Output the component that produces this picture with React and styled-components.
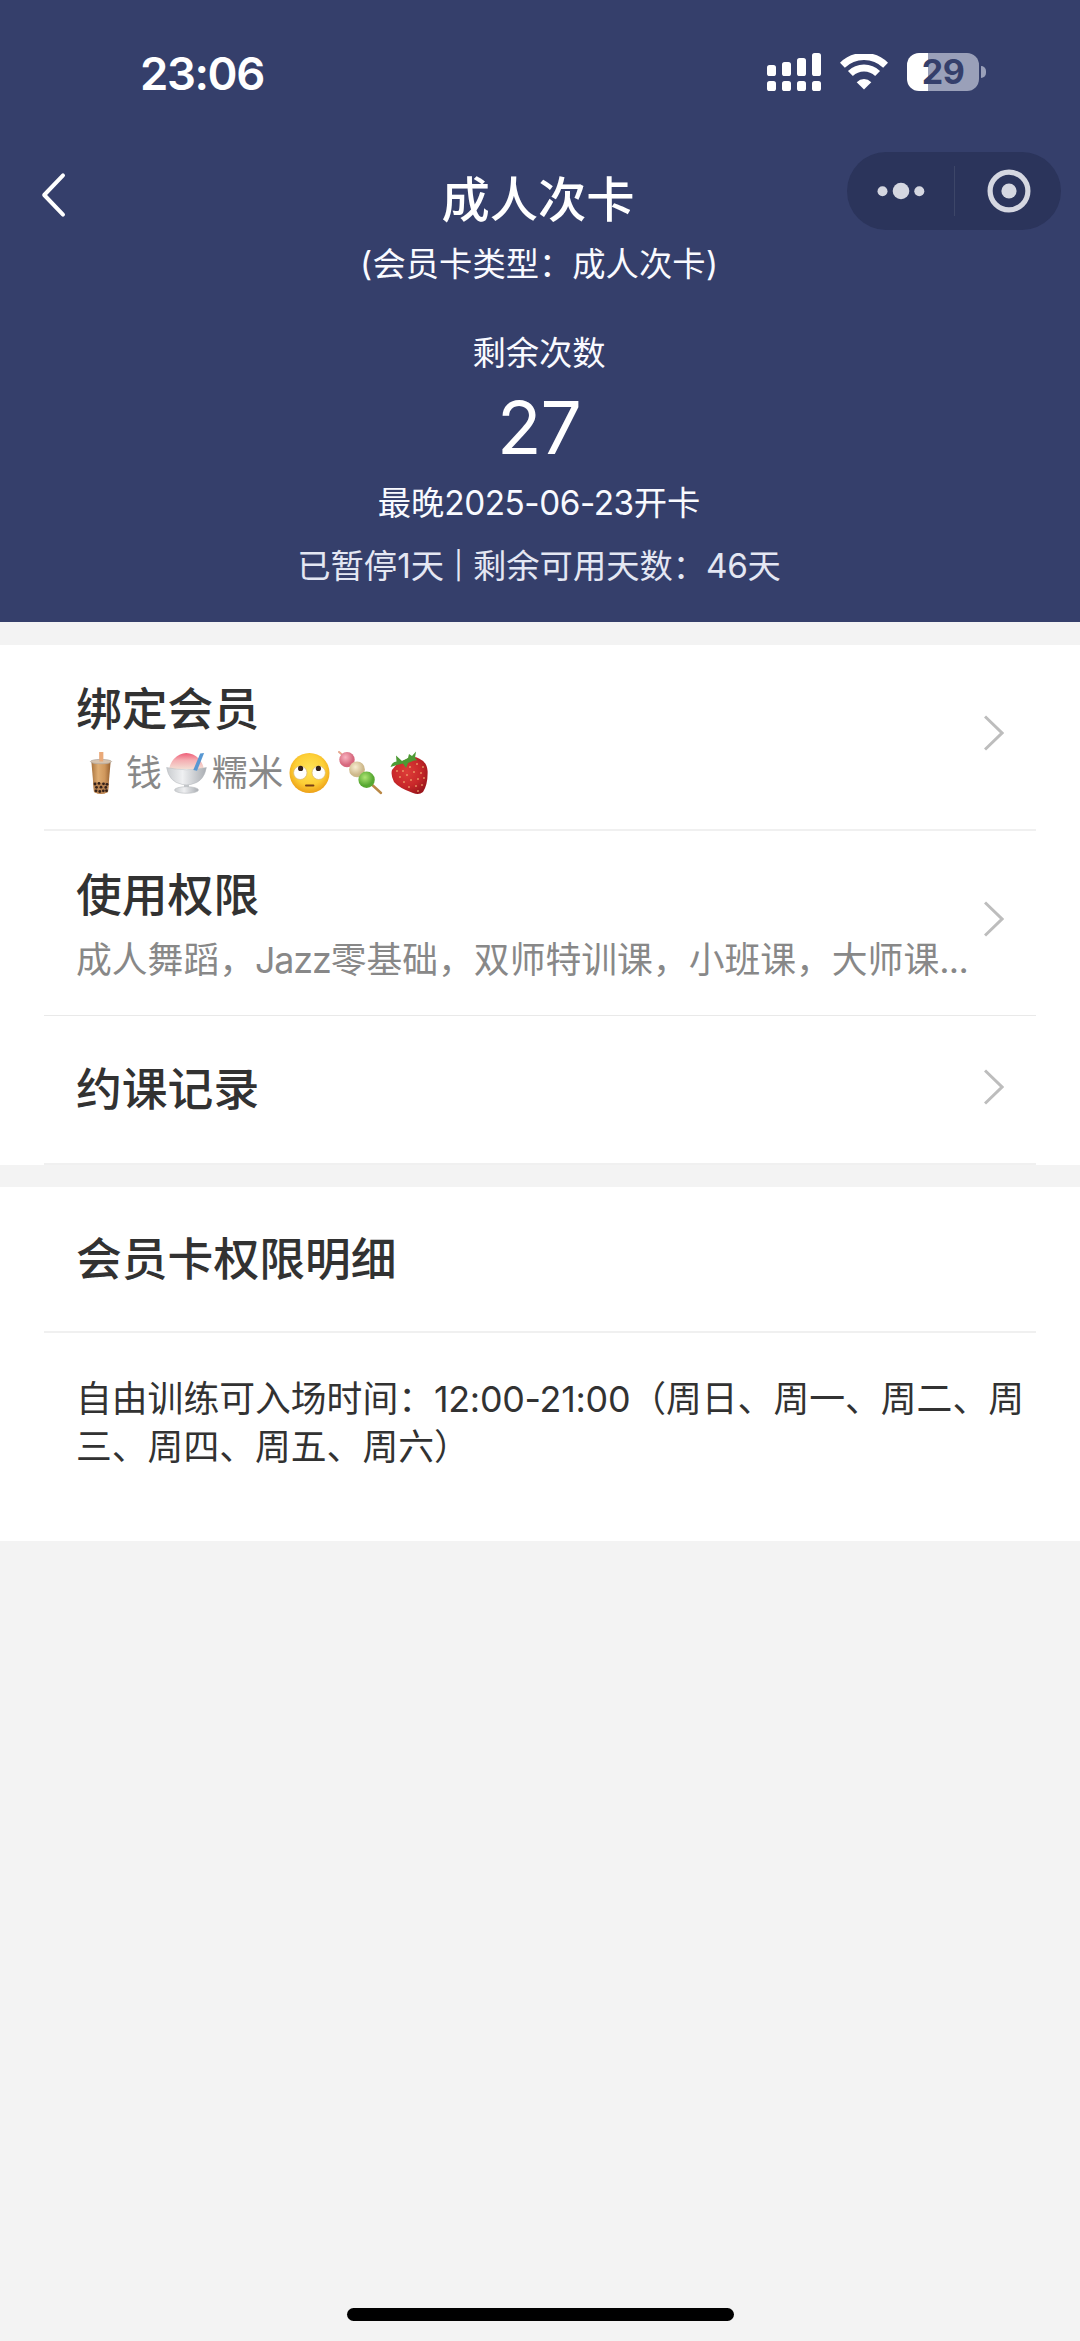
import React from "react";
import styled, { createGlobalStyle } from "styled-components";

const GlobalStyle = createGlobalStyle`
  * { box-sizing: border-box; }
  body {
    margin: 0;
    background: #f3f3f3;
    font-family: Inter, "Noto Sans CJK SC", sans-serif;
    text-spacing-trim: space-all;
    -webkit-font-smoothing: antialiased;
  }
`;

const Screen = styled.div`
  width: 1080px;
  height: 2341px;
  display: flex;
  flex-direction: column;
  background: #f3f3f3;
  overflow: hidden;
`;

const Header = styled.header`
  height: 622px;
  flex: none;
  background: #353f6b;
  color: #fff;
`;

const StatusBar = styled.div`
  height: 147px;
  padding: 0 94px 0 140px;
  display: flex;
  align-items: center;
  justify-content: space-between;
`;

const Clock = styled.time`
  font-size: 45.5px;
  line-height: 60px;
  font-weight: 600;
  letter-spacing: -1.4px;
`;

const StatusIcons = styled.div`
  display: flex;
  align-items: center;
  gap: 19px;
  padding-bottom: 3px;
`;

const BatteryBox = styled.div`
  display: flex;
  align-items: center;
  gap: 2px;
`;

const BatteryBody = styled.div`
  width: 72px;
  height: 38px;
  border-radius: 12px;
  background: linear-gradient(to right, #fff 0 21px, #9aa0b9 21px);
  color: #353f6b;
  font-size: 34px;
  line-height: 38px;
  font-weight: 700;
  letter-spacing: -0.5px;
  text-align: center;
`;

const BatteryTip = styled.div`
  width: 5px;
  height: 12px;
  border-radius: 0 6px 6px 0;
  background: #9aa0b9;
`;

const NavBar = styled.nav`
  height: 88px;
  padding: 0 19px 0 40px;
  display: grid;
  grid-template-columns: 214px 1fr 214px;
`;

const BackButton = styled.button`
  width: 30px;
  height: 95px;
  padding: 0;
  border: 0;
  background: none;
  display: flex;
  align-items: center;
`;

const NavTitle = styled.h1`
  margin: 16px 0 0;
  padding-right: 25px;
  font-size: 48.3px;
  line-height: 73px;
  font-weight: 500;
  text-align: center;
`;

const Capsule = styled.div`
  width: 214px;
  height: 78px;
  margin-top: 5px;
  border-radius: 39px;
  background: #2b345b;
  display: grid;
  grid-template-columns: 107px 1px 107px;
  align-items: center;
  justify-items: center;
`;

const CapsuleDivider = styled.div`
  width: 1px;
  height: 50px;
  background: #3d4668;
`;

const CardInfo = styled.div`
  padding-right: 2px;
  display: flex;
  flex-direction: column;
  align-items: center;
`;

const InfoLine = styled.div`
  margin-top: ${(p) => p.$gap || 0}px;
  font-size: 33.3px;
  line-height: ${(p) => p.$line || 50}px;
  color: ${(p) => p.$color || "#f9faff"};
  white-space: pre;
`;

const Latin = styled.span`
  letter-spacing: ${(p) => p.$track}px;
`;

const Paren = styled.span`
  display: inline-block;
  width: 13px;
  text-align: center;
`;

const Divider = styled.span`
  display: inline-block;
  width: 29px;
  height: 50px;
  font-size: 27px;
  text-align: center;
  vertical-align: top;
`;

const Remaining = styled.div`
  font-size: 73px;
  line-height: 100px;
  font-weight: 400;
  letter-spacing: -0.8px;
`;

const Section = styled.section`
  flex: none;
  margin-top: ${(p) => p.$gap}px;
  padding: 0 44px;
  background: #fff;
`;

const Row = styled.div`
  height: ${(p) => p.$height}px;
  padding: ${(p) => p.$top}px 32px 0 32px;
  border-bottom: ${(p) => p.$rule || 2}px solid ${(p) => (p.$rule === 1 ? "#e9e9e9" : "#f0f0f0")};
  display: grid;
  grid-template-columns: 1fr 20px;
  align-items: start;
`;

const RowText = styled.div`
  min-width: 0;
`;

const RowTitle = styled.h2`
  margin: 0;
  font-size: 45.8px;
  line-height: 64px;
  font-weight: 500;
  color: #323232;
`;

const RowNote = styled.div`
  height: 64px;
  font-size: 35.8px;
  line-height: 64px;
  color: #888;
  white-space: nowrap;
`;

const MemberName = styled(RowNote)`
  height: 62px;
  display: flex;
  align-items: center;
`;

const EmojiBox = styled.span`
  display: flex;
  justify-content: center;
  flex: none;
  width: ${(p) => p.$width}px;
`;

const ChevronBox = styled.div`
  display: flex;
  padding-top: ${(p) => p.$top}px;
`;

const Details = styled.p`
  margin: 0;
  height: 208px;
  padding: 42px 0 0 32px;
  font-size: 35.8px;
  line-height: 48px;
  color: #323232;
`;

const HomeArea = styled.footer`
  margin-top: auto;
  padding-bottom: 20px;
  display: flex;
  justify-content: center;
`;

const HomeIndicator = styled.div`
  width: 387px;
  height: 13px;
  border-radius: 7px;
  background: #000;
`;

const SignalIcon = () => (
  <svg width="54" height="38" viewBox="0 0 54 38" fill="#fff">
    {[12, 9, 5, 0].map((top, i) => (
      <React.Fragment key={top}>
        <rect x={i * 15} y={top} width="9" height={23 - top} rx="2.6" />
        <rect x={i * 15} y="28" width="9" height="10" rx="2.6" />
      </React.Fragment>
    ))}
  </svg>
);

const WifiIcon = () => (
  <svg width="48" height="36" viewBox="0 0 48 36" fill="none" stroke="#fff">
    <path d="M2.4 11.2 A31 31 0 0 1 45.6 11.2" strokeWidth="7" />
    <path d="M10.4 19.6 A19.5 19.5 0 0 1 37.6 19.6" strokeWidth="7" />
    <path d="M24 35.6 L16.7 28.2 Q20 25.1 24 25.1 Q28 25.1 31.3 28.2 Z" fill="#fff" stroke="none" />
  </svg>
);

const BackIcon = () => (
  <svg width="28" height="46" viewBox="0 0 28 46" fill="none" stroke="#fff" strokeWidth="4" strokeLinecap="round" strokeLinejoin="round">
    <path d="M23 3.4 L4.2 23 L23 42.6" />
  </svg>
);

const MoreIcon = () => (
  <svg width="48" height="20" viewBox="0 0 48 20" fill="#d5d7e1">
    <circle cx="5.5" cy="10.3" r="5" />
    <circle cx="24" cy="10" r="8.3" />
    <circle cx="42.3" cy="10.3" r="5" />
  </svg>
);

const TargetIcon = () => (
  <svg width="44" height="44" viewBox="0 0 44 44">
    <circle cx="22" cy="22" r="18.9" fill="none" stroke="#d5d7e1" strokeWidth="5.2" />
    <circle cx="22" cy="22" r="7.6" fill="#d5d7e1" />
  </svg>
);

const Chevron = ({ top }) => (
  <ChevronBox $top={top}>
    <svg width="20" height="36" viewBox="0 0 20 36" fill="none" stroke="#bdbdbd" strokeWidth="3">
      <path d="M1 1.5 L18 18 L1 34.5" />
    </svg>
  </ChevronBox>
);

const BubbleTea = () => (
  <svg width="24" height="43" viewBox="0 0 24 43" role="img" aria-label="🧋">
    <defs>
      <linearGradient id="tea" x1="0" x2="1">
        <stop offset="0" stopColor="#a9743f" />
        <stop offset=".35" stopColor="#dfad72" />
        <stop offset=".7" stopColor="#cf975c" />
        <stop offset="1" stopColor="#96602f" />
      </linearGradient>
    </defs>
    <rect x="10.4" y="0" width="3.8" height="12" fill="#e9a877" />
    <path d="M2.4 10 L5 40 Q12 44 19 40 L21.6 10 Z" fill="url(#tea)" />
    <path d="M4 29 L5 40 Q12 44 19 40 L20 29 Q12 33 4 29Z" fill="#b98452" />
    <ellipse cx="12" cy="9.6" rx="10.6" ry="2.2" fill="#d7c3ad" stroke="#b5aaa0" strokeWidth=".8" />
    <rect x="10.4" y="0" width="3.8" height="9.5" fill="#eaaa79" />
    <g fill="#35221a">
      {[[6, 32], [10, 31.4], [14.5, 31.8], [18, 32.3], [7.5, 35.3], [12, 35.2], [16.8, 35.4], [7, 38.8], [10.8, 39.5], [14.3, 38.8], [17.5, 38.7]].map(([x, y]) => (
        <circle key={`${x}-${y}`} cx={x} cy={y} r="1.4" />
      ))}
    </g>
  </svg>
);

const ShavedIce = () => (
  <svg width="41" height="42" viewBox="0 0 41 42" role="img" aria-label="🍧">
    <defs>
      <linearGradient id="ice" x1="0" x2="0" y1="0" y2="1">
        <stop offset="0" stopColor="#ee5b76" />
        <stop offset=".45" stopColor="#f5aeb2" />
        <stop offset="1" stopColor="#f3ded4" />
      </linearGradient>
      <linearGradient id="glass" x1="0" x2="1">
        <stop offset="0" stopColor="#c9cccf" />
        <stop offset=".4" stopColor="#eff0f2" />
        <stop offset="1" stopColor="#a9adb2" />
      </linearGradient>
    </defs>
    <path d="M3 17 Q5 7 14 2.5 Q20 -.7 27 2.5 Q36 7 38 17 Z" fill="url(#ice)" />
    <path d="M18 27 H23 V36 H18Z" fill="#c4c7cb" />
    <ellipse cx="20.5" cy="38" rx="12" ry="3.3" fill="url(#glass)" stroke="#b7babe" strokeWidth=".6" />
    <path d="M.6 15.5 Q20 20 40.4 15.5 Q38 30 25 32.4 Q20.5 33.4 16 32.4 Q3 30 .6 15.5Z" fill="url(#glass)" stroke="#b5b8bc" strokeWidth=".5" />
    <path d="M27.3 18 L34.2 1.4 L38.1 1 L31 18.8Z" fill="#5797d2" />
  </svg>
);

const RollingEyes = () => (
  <svg width="41" height="42" viewBox="0 0 41 42" role="img" aria-label="🙄">
    <defs>
      <radialGradient id="face" cx=".5" cy=".42" r=".58">
        <stop offset="0" stopColor="#ffe458" />
        <stop offset=".65" stopColor="#fdcf36" />
        <stop offset="1" stopColor="#eda017" />
      </radialGradient>
    </defs>
    <circle cx="20.5" cy="21" r="20" fill="url(#face)" />
    <g fill="#fff" stroke="#d9b573" strokeWidth=".7">
      <circle cx="11.3" cy="20.8" r="6.7" />
      <circle cx="29.7" cy="20.8" r="6.7" />
    </g>
    <g fill="#32201a">
      <circle cx="11.6" cy="16.4" r="2.6" />
      <circle cx="29.4" cy="16.4" r="2.6" />
      <rect x="16" y="32.5" width="9.4" height="2.1" rx="1" fill="#784016" />
    </g>
  </svg>
);

const Dango = () => (
  <svg width="45" height="44" viewBox="0 0 45 44" role="img" aria-label="🍡">
    <defs>
      <radialGradient id="pink" cx=".4" cy=".35"><stop offset="0" stopColor="#f9b4c0" /><stop offset="1" stopColor="#d6677d" /></radialGradient>
      <radialGradient id="cream" cx=".4" cy=".35"><stop offset="0" stopColor="#f7ecd0" /><stop offset="1" stopColor="#cdb88a" /></radialGradient>
      <radialGradient id="green" cx=".4" cy=".35"><stop offset="0" stopColor="#aee473" /><stop offset="1" stopColor="#57a832" /></radialGradient>
    </defs>
    <path d="M1 1 L4 3.6" stroke="#e6a78e" strokeWidth="2" strokeLinecap="round" />
    <path d="M31 31 L43 42" stroke="#ba8846" strokeWidth="2.4" strokeLinecap="round" />
    <circle cx="9" cy="8.6" r="7.7" fill="url(#pink)" />
    <circle cx="19" cy="18.4" r="7.9" fill="url(#cream)" />
    <circle cx="28.6" cy="28.8" r="8.2" fill="url(#green)" />
  </svg>
);

const Strawberry = () => (
  <svg width="38" height="44" viewBox="0 0 38 44" role="img" aria-label="🍓">
    <defs>
      <radialGradient id="berry" cx=".42" cy=".4" r=".65">
        <stop offset="0" stopColor="#dd3d38" />
        <stop offset=".6" stopColor="#c9282a" />
        <stop offset="1" stopColor="#9c161c" />
      </radialGradient>
    </defs>
    <path d="M2 19 Q7 11 15 9 Q22 4 29 7.5 Q37 11 37.6 20 Q38 33 33 41 Q29 44.5 23 42 Q9 37 4 31 Q.5 24 2 19Z" fill="url(#berry)" />
    <path d="M.5 16 Q2 11 6.5 10.5 L6 4.5 L12 10 L18 7 L19 3 L22 5 L26 .5 L25 7 Q29 10 24 9.5 L18 12 L16 17 L13 12.5 L7 14Z" fill="#4d9a34" />
    <g fill="#f6bd79">
      {[[7, 20], [13, 20], [20, 16], [27, 13], [33, 16], [10, 26], [17, 24], [24, 21], [31, 22], [14, 31], [21, 29], [28, 28], [34, 27], [19, 36], [26, 35], [32, 34], [28, 40]].map(([x, y]) => (
        <ellipse key={`${x}-${y}`} cx={x} cy={y} rx=".7" ry=".95" />
      ))}
    </g>
  </svg>
);

export default function App() {
  return (
    <>
      <GlobalStyle />
      <Screen>
        <Header>
          <StatusBar>
            <Clock>23:06</Clock>
            <StatusIcons>
              <SignalIcon />
              <WifiIcon />
              <BatteryBox>
                <BatteryBody>29</BatteryBody>
                <BatteryTip />
              </BatteryBox>
            </StatusIcons>
          </StatusBar>
          <NavBar>
            <BackButton aria-label="返回">
              <BackIcon />
            </BackButton>
            <NavTitle>成人次卡</NavTitle>
            <Capsule>
              <MoreIcon />
              <CapsuleDivider />
              <TargetIcon />
            </Capsule>
          </NavBar>
          <CardInfo>
            <InfoLine $line={58}>
              <Paren>(</Paren>会员卡类型：成人次卡<Paren>)</Paren>
            </InfoLine>
            <InfoLine $gap={35}>剩余次数</InfoLine>
            <Remaining>27</Remaining>
            <InfoLine>最晚<Latin $track={-0.45}>2025-06-23</Latin>开卡</InfoLine>
            <InfoLine $gap={13} $color="#e4e7f3">
              已暂停1天<Divider>|</Divider>剩余可用天数：<Latin $track={-0.4}>46</Latin>天
            </InfoLine>
          </CardInfo>
        </Header>

        <Section $gap={23}>
          <Row $height={186} $top={33}>
            <RowText>
              <RowTitle>绑定会员</RowTitle>
              <MemberName>
                <EmojiBox $width={50}><BubbleTea /></EmojiBox>
                钱
                <EmojiBox $width={50}><ShavedIce /></EmojiBox>
                糯米
                <EmojiBox $width={53}><RollingEyes /></EmojiBox>
                <EmojiBox $width={49}><Dango /></EmojiBox>
                <EmojiBox $width={47}><Strawberry /></EmojiBox>
              </MemberName>
            </RowText>
            <Chevron top={37} />
          </Row>
          <Row $height={185} $top={33} $rule={1}>
            <RowText>
              <RowTitle>使用权限</RowTitle>
              <RowNote>
                成人舞蹈，<Latin $track={-1.1}>Jazz</Latin>零基础，双师特训课，小班课，大师课<Latin $track={-0.7}>...</Latin>
              </RowNote>
            </RowText>
            <Chevron top={37} />
          </Row>
          <Row $height={149} $top={42}>
            <RowTitle>约课记录</RowTitle>
            <Chevron top={11} />
          </Row>
        </Section>

        <Section $gap={22}>
          <Row $height={146} $top={41}>
            <RowTitle>会员卡权限明细</RowTitle>
          </Row>
          <Details>
            自由训练可入场时间：<Latin $track={-0.25}>12:00-21:00</Latin>（周日、周一、周二、周三、周四、周五、周六）
          </Details>
        </Section>

        <HomeArea>
          <HomeIndicator />
        </HomeArea>
      </Screen>
    </>
  );
}
